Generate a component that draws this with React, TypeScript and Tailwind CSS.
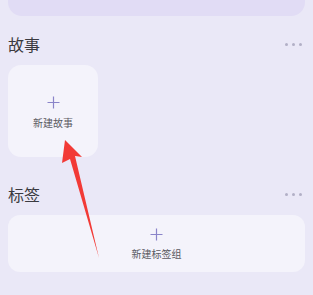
import * as React from "react";

const Dots = () => (
  <div className="flex items-center gap-[4px] pr-[3px]">
    <span className="w-[3px] h-[3px] rounded-full bg-[#b2b0c6]" />
    <span className="w-[3px] h-[3px] rounded-full bg-[#b2b0c6]" />
    <span className="w-[3px] h-[3px] rounded-full bg-[#b2b0c6]" />
  </div>
);

const Plus = () => (
  <svg width="13" height="13" viewBox="0 0 13 13" fill="none">
    <path d="M6.5 0.5v12M0.5 6.5h12" stroke="#8a84c9" strokeWidth="1.2" />
  </svg>
);

const SectionHeader = ({ title }: { title: string }) => (
  <div className="flex items-center justify-between h-[20px]">
    <span className="text-[16px] leading-[20px] text-[#3a3a40]">{title}</span>
    <Dots />
  </div>
);

const App = () => {
  return (
    <div
      className="relative w-[313px] h-[295px] overflow-hidden bg-[#eae8f7] px-[8px]"
      style={{ fontFamily: '"Noto Sans CJK SC", "Noto Sans", sans-serif' }}
    >
      <div className="h-[16px] -mt-[20px] pt-[20px] box-content rounded-b-[14px] bg-[#e1dcf5]" />

      <div className="mt-[18px]">
        <SectionHeader title="故事" />
      </div>

      <div className="mt-[11px] w-[90px] h-[92px] rounded-[13px] bg-[#f4f3fb] flex flex-col items-center pt-[31px]">
        <Plus />
        <span className="mt-[7px] text-[10px] leading-[14px] text-[#5a5a62]">新建故事</span>
      </div>

      <div className="mt-[27px]">
        <SectionHeader title="标签" />
      </div>

      <div className="mt-[11px] h-[57px] rounded-[12px] bg-[#f4f3fb] flex flex-col items-center pt-[13px]">
        <Plus />
        <span className="mt-[6px] text-[10px] leading-[14px] text-[#5a5a62]">新建标签组</span>
      </div>

      <svg
        className="absolute left-0 top-0 pointer-events-none"
        width="313"
        height="295"
        viewBox="0 0 313 295"
      >
        <path
          d="M65 140 L62 163 L70 159 L99 258 L75 156 L82 157 Z"
          fill="#f23a36"
        />
      </svg>
    </div>
  );
};

export default App;
